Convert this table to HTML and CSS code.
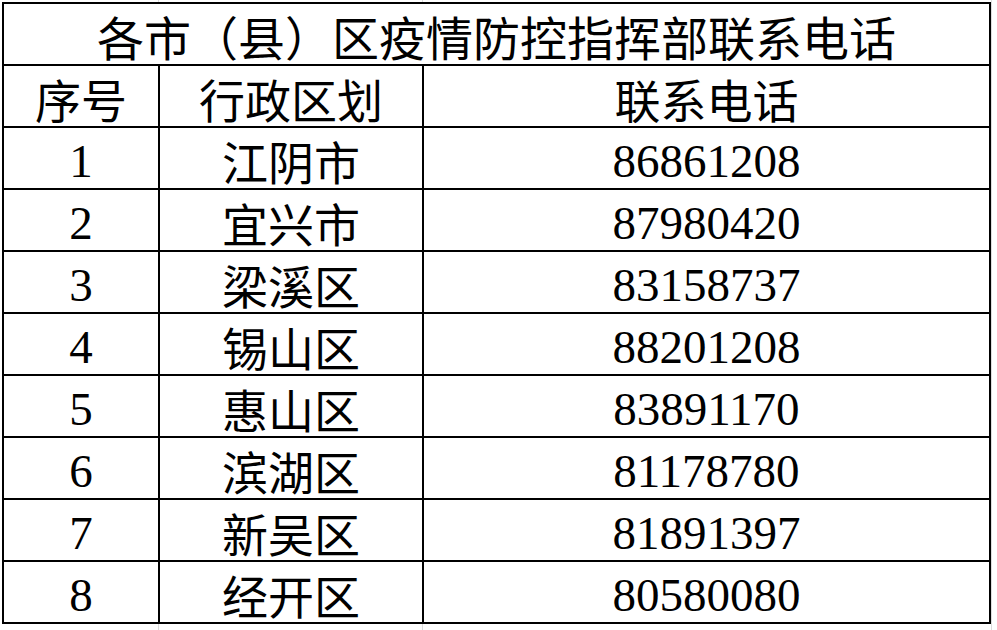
FILE: index.html
```html
<!DOCTYPE html>
<html lang="zh-CN">
<head>
<meta charset="utf-8">
<title>各市（县）区疫情防控指挥部联系电话</title>
<link rel="stylesheet" href="styles.css">
</head>
<body>
<div class="sheet">
  <table class="contacts">
    <colgroup>
      <col class="c-no">
      <col class="c-area">
      <col class="c-tel">
    </colgroup>
    <tr class="title-row"><td colspan="3" class="title">各市（县）区疫情防控指挥部联系电话</td></tr>
    <tr class="head-row"><td>序号</td><td>行政区划</td><td>联系电话</td></tr>
    <tr><td class="num">1</td><td>江阴市</td><td class="num">86861208</td></tr>
    <tr><td class="num">2</td><td>宜兴市</td><td class="num">87980420</td></tr>
    <tr><td class="num">3</td><td>梁溪区</td><td class="num">83158737</td></tr>
    <tr><td class="num">4</td><td>锡山区</td><td class="num">88201208</td></tr>
    <tr><td class="num">5</td><td>惠山区</td><td class="num">83891170</td></tr>
    <tr><td class="num">6</td><td>滨湖区</td><td class="num">81178780</td></tr>
    <tr><td class="num">7</td><td>新吴区</td><td class="num">81891397</td></tr>
    <tr><td class="num">8</td><td>经开区</td><td class="num">80580080</td></tr>
  </table>
</div>
</body>
</html>
```
FILE: styles.css
```css
html, body {
  margin: 0;
  padding: 0;
  background: #ffffff;
}

body {
  width: 997px;
  height: 630px;
  overflow: hidden;
  font-family: "Noto Sans CJK SC", "Liberation Serif", serif;
  color: #000;
  background-color: #fff;
  background-image:
    linear-gradient(to right, transparent 158px, #dcdcdc 158px, #dcdcdc 159px, transparent 159px),
    linear-gradient(to right, transparent 422px, #dcdcdc 422px, #dcdcdc 423px, transparent 423px),
    linear-gradient(to right, transparent 991px, #dcdcdc 991px, #dcdcdc 992px, transparent 992px);
}

.sheet {
  padding: 2px 0 0 2px;
}

.contacts {
  border-collapse: collapse;
  table-layout: fixed;
  width: 989px;
  background: #fff;
}

.c-no { width: 156px; }
.c-area { width: 264px; }
.c-tel { width: 567px; }

.contacts tr {
  height: 62px;
}

.contacts td {
  border: 2px solid #000;
  padding: 4px 0 0 0;
  text-align: center;
  vertical-align: middle;
  font-size: 46px;
  line-height: 56px;
  font-weight: 400;
  white-space: nowrap;
}

.contacts td.title {
  font-size: 47px;
}

.contacts td.num {
  font-family: "Liberation Serif", "Times New Roman", serif;
  font-size: 47px;
  padding-top: 6px;
  line-height: 54px;
}
```
